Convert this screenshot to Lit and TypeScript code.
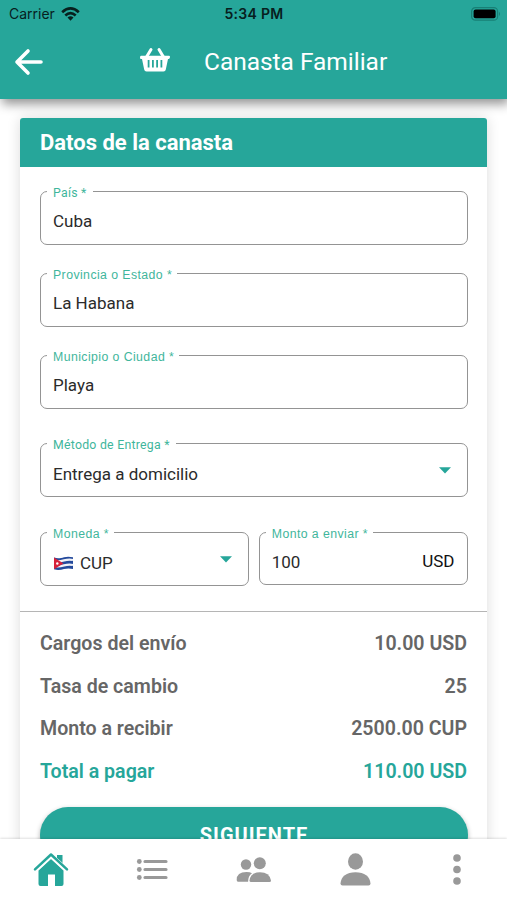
import { LitElement, html, css, svg, nothing } from "lit";
import { customElement, property } from "lit/decorators.js";
import { classMap } from "lit/directives/class-map.js";

@customElement("form-field")
class FormField extends LitElement {
  @property() label = "";
  @property() value = "";
  @property() suffix = "";
  @property({ type: Boolean, reflect: true }) select = false;
  @property({ type: Boolean }) flag = false;
  @property({ type: Boolean, reflect: true }) wide = false;

  static styles = css`
    :host {
      display: block;
      position: relative;
      box-sizing: border-box;
      height: 54px;
      border: 1.4px solid #949494;
      border-radius: 7px;
      font-family: Roboto, "Liberation Sans", sans-serif;
    }
    .label {
      position: absolute;
      left: 6px;
      top: -7px;
      padding: 0 6px;
      background: #fff;
      color: #3fb69c;
      font-size: 12.3px;
      line-height: 16px;
      letter-spacing: 0.25px;
      white-space: nowrap;
    }
    :host([wide]) .label {
      padding-right: 5px;
      font-family: "Liberation Sans", Roboto, sans-serif;
      letter-spacing: 0.42px;
    }
    .body {
      display: flex;
      align-items: center;
      height: 100%;
      box-sizing: border-box;
      padding: 6px 12px 0 12px;
      color: #2b2b2b;
      font-size: 17px;
    }
    :host([select]) .body {
      padding-top: 8px;
    }
    .flag {
      width: 21px;
      height: 16px;
      margin-right: 6px;
    }
    .value {
      flex: 1;
    }
    .suffix {
      color: #111;
      margin-bottom: 2px;
    }
    .caret {
      width: 12px;
      height: 7px;
      margin: 0 4px 7px 0;
    }
  `;

  render() {
    return html`
      <span class="label">${this.label} *</span>
      <div class="body">
        ${this.flag
          ? html`<svg class="flag" viewBox="0 0 21 16">
              <path d="M1 2.5C5 4 8 3 11 2.2S17 1.5 20 2.3V14C17 13.2 14 13.2 11 14S5 15.5 1 14.3Z" fill="#244a9c" />
              <path d="M1 5.8C5 7 8 6.2 11 5.4S17 4.3 20 5" stroke="#f2f3f8" stroke-width="2.2" fill="none" />
              <path d="M1 10.8C5 12 8 11.2 11 10.4S17 9.3 20 10" stroke="#f2f3f8" stroke-width="2.2" fill="none" />
              <path d="M1 2.5L10.5 8.5L1 14.3Z" fill="#d6213a" />
              <circle cx="4.3" cy="8.5" r="1.2" fill="#fff" />
            </svg>`
          : nothing}
        <span class="value">${this.value}</span>
        ${this.suffix ? html`<span class="suffix">${this.suffix}</span>` : nothing}
        ${this.select
          ? html`<svg class="caret" viewBox="0 0 12 7"><path d="M0 .3H12L6 6.5Z" fill="#26a69a" /></svg>`
          : nothing}
      </div>
    `;
  }
}

const tabs = [
  svg`<g fill="#26a69a"><path d="M24 3H29.5V12L24 8Z"/><path d="M5.5 18.5 18 7 30.5 18.5V32Q30.5 34 28.5 34H22V22.5H15V34H7.5Q5.5 34 5.5 32Z"/></g><path d="M2.2 17.8 18 3.5 33.8 17.8" fill="none" stroke="#fff" stroke-width="4.6"/><path d="M2 17.3 18 2.5 34 17.3" fill="none" stroke="#26a69a" stroke-width="2.5" stroke-linecap="round" stroke-linejoin="round"/>`,
  svg`<g stroke="#999" stroke-width="3.2" stroke-linecap="round"><path d="M11 9.5H32M11 17.5H32M11 25.5H32"/></g><g fill="#999"><circle cx="5.3" cy="9.5" r="2.4"/><circle cx="5.3" cy="17.5" r="2.4"/><circle cx="5.3" cy="25.5" r="2.4"/></g>`,
  svg`<g fill="#999"><circle cx="11" cy="12.5" r="5.2"/><circle cx="24.8" cy="11.3" r="6"/><path d="M1.7 28Q1.5 20 11.5 20Q15 20 17 21.2Q13 24 13.1 29.8H3Q1.7 29.8 1.7 28Z"/><path d="M14.5 28.5Q15.5 20.2 25 20.2T36 28.5Q36 30 34.5 30H16Q14.5 30 14.5 28.5Z"/></g>`,
  svg`<g fill="#999"><ellipse cx="18.5" cy="9.5" rx="7.5" ry="8.2"/><path d="M3.5 31.5C4 24.5 9.5 20.3 18.5 20.3S33 24.5 33.5 31.5Q33.5 33.5 31.5 33.5H5.5Q3.5 33.5 3.5 31.5Z"/></g>`,
  svg`<g fill="#999"><circle cx="19" cy="6" r="3.8"/><circle cx="19" cy="17.5" r="3.8"/><circle cx="19" cy="29" r="3.8"/></g>`,
];

const charges = [
  { name: "Cargos del envío", amount: "10.00 USD" },
  { name: "Tasa de cambio", amount: "25" },
  { name: "Monto a recibir", amount: "2500.00 CUP" },
  { name: "Total a pagar", amount: "110.00 USD", total: true },
];

@customElement("app-root")
class AppRoot extends LitElement {
  static styles = css`
    :host {
      display: flex;
      flex-direction: column;
      height: 900px;
      overflow: hidden;
      background: #fff;
      font-family: Roboto, "Liberation Sans", sans-serif;
    }
    .top {
      position: relative;
      z-index: 1;
      flex: none;
      height: 98.5px;
      background: #26a69a;
      box-shadow: 2px 5px 10px rgba(0, 0, 0, 0.42);
    }
    .status {
      display: grid;
      grid-template-columns: 1fr auto 1fr;
      align-items: center;
      height: 27px;
      padding: 0 6px 0 9px;
      color: #07201e;
      font-family: Inter, "Liberation Sans", sans-serif;
      font-size: 14px;
    }
    .carrier {
      display: flex;
      align-items: center;
      gap: 6px;
    }
    .wifi {
      width: 19px;
      height: 14px;
    }
    .time {
      font-weight: 600;
      letter-spacing: 0.3px;
      margin-right: 2px;
    }
    .battery {
      width: 30px;
      height: 14px;
      justify-self: end;
    }
    .bar {
      display: flex;
      align-items: center;
      height: 69px;
      padding-left: 14px;
      color: #fff;
    }
    .back {
      width: 30px;
      height: 28px;
    }
    .basket {
      width: 32px;
      height: 26px;
      margin: -3px 0 0 95px;
    }
    .title {
      margin-left: 33px;
      font-size: 24.5px;
      letter-spacing: -0.03px;
    }
    .page {
      flex: 1;
      min-height: 0;
      overflow: hidden;
      padding: 19.9px 20px 0;
    }
    .card {
      height: 760px;
      border-radius: 3px;
      background: #fff;
      box-shadow: 0 0 14px rgba(0, 0, 0, 0.14);
    }
    .heading {
      display: flex;
      align-items: center;
      height: 48.3px;
      padding-left: 20px;
      border-radius: 3px 3px 0 0;
      background: #26a69a;
      color: #fff;
      font-size: 22px;
      font-weight: 700;
    }
    .fields {
      display: flex;
      flex-direction: column;
      gap: 28px;
      padding: 24px 19.5px 24.5px 20px;
      border-bottom: 1.5px solid #b5b5b5;
    }
    .method {
      margin-top: 6.5px;
    }
    .pair {
      display: grid;
      grid-template-columns: 1fr 1fr;
      gap: 10px;
      margin-top: 7px;
    }
    .amount {
      height: 53px;
    }
    .charges {
      display: flex;
      flex-direction: column;
      padding: 10.4px 20px 0;
    }
    .charge {
      display: flex;
      justify-content: space-between;
      align-items: center;
      height: 42.7px;
      color: #666;
      font-size: 19.6px;
      font-weight: 600;
    }
    .charge.total {
      color: #26a69a;
    }
    .next {
      display: block;
      width: 428px;
      height: 56px;
      margin: 14px 20px 0;
      padding: 0;
      border: 0;
      border-radius: 28px;
      background: #26a69a;
      box-shadow: 0 2px 5px rgba(0, 0, 0, 0.3);
      color: #fff;
      font: 700 20px Roboto, "Liberation Sans", sans-serif;
      letter-spacing: 1px;
    }
    .tabs {
      position: relative;
      flex: none;
      display: grid;
      grid-template-columns: repeat(5, 1fr);
      justify-items: center;
      height: 61px;
      padding-top: 13px;
      box-sizing: border-box;
      background: #fff;
      box-shadow: 0 -1px 2px rgba(0, 0, 0, 0.12);
    }
    .tab {
      width: 36px;
      height: 36px;
    }
  `;

  render() {
    return html`
      <header class="top">
        <div class="status">
          <span class="carrier">Carrier
            <svg class="wifi" viewBox="0 0 19 14">
              <g fill="none" stroke="#07201e" stroke-width="2.7"><path d="M1.2 5.2Q9.5-2.3 17.8 5.2"/><path d="M4.3 8.5Q9.5 3.8 14.7 8.5"/></g>
              <path d="M6.5 10.5Q9.5 8 12.5 10.5L9.5 13.7Z" fill="#07201e"/>
            </svg>
          </span>
          <span class="time">5:34 PM</span>
          <svg class="battery" viewBox="0 0 30 14">
            <rect x=".6" y=".6" width="26" height="12.6" rx="3.8" fill="none" stroke="#188076" stroke-width="1.2"/>
            <rect x="2.6" y="2.5" width="22" height="8.8" rx="2" fill="#000"/>
            <path d="M28 4.8Q30 6.9 28 9Z" fill="#188076"/>
          </svg>
        </div>
        <div class="bar">
          <svg class="back" viewBox="0 0 30 28"><path d="M14 3 3 14 14 25M3 14H27" fill="none" stroke="#fff" stroke-width="3.6" stroke-linecap="round" stroke-linejoin="round"/></svg>
          <svg class="basket" viewBox="0 0 32 26">
            <path d="M12 2.5 7.5 10M20 2.5 24.5 10" stroke="#fff" stroke-width="3" stroke-linecap="round"/>
            <path fill-rule="evenodd" fill="#fff" d="M2 8.8H30Q31 8.8 31 10T30 12H29L26.8 22.5Q26.5 24.5 24.5 24.5H7.5Q5.5 24.5 5.2 22.5L3 12H2Q1 12 1 10.4T2 8.8ZM8.7 13V20.5H10.5V13ZM13 13V20.5H14.8V13ZM17.2 13V20.5H19V13ZM21.5 13V20.5H23.3V13Z"/>
          </svg>
          <span class="title">Canasta Familiar</span>
        </div>
      </header>
      <main class="page">
        <section class="card">
          <div class="heading">Datos de la canasta</div>
          <div class="fields">
            <form-field label="País" value="Cuba"></form-field>
            <form-field wide label="Provincia o Estado" value="La Habana"></form-field>
            <form-field wide label="Municipio o Ciudad" value="Playa"></form-field>
            <form-field class="method" select label="Método de Entrega" value="Entrega a domicilio"></form-field>
            <div class="pair">
              <form-field wide flag select label="Moneda" value="CUP"></form-field>
              <form-field class="amount" wide label="Monto a enviar" value="100" suffix="USD"></form-field>
            </div>
          </div>
          <div class="charges">
            ${charges.map(
              (c) => html`<div class=${classMap({ charge: true, total: !!c.total })}>
                <span>${c.name}</span><span>${c.amount}</span>
              </div>`
            )}
          </div>
          <button class="next">SIGUIENTE</button>
        </section>
      </main>
      <nav class="tabs">
        ${tabs.map((icon) => html`<svg class="tab" viewBox="0 0 36 36">${icon}</svg>`)}
      </nav>
    `;
  }
}
